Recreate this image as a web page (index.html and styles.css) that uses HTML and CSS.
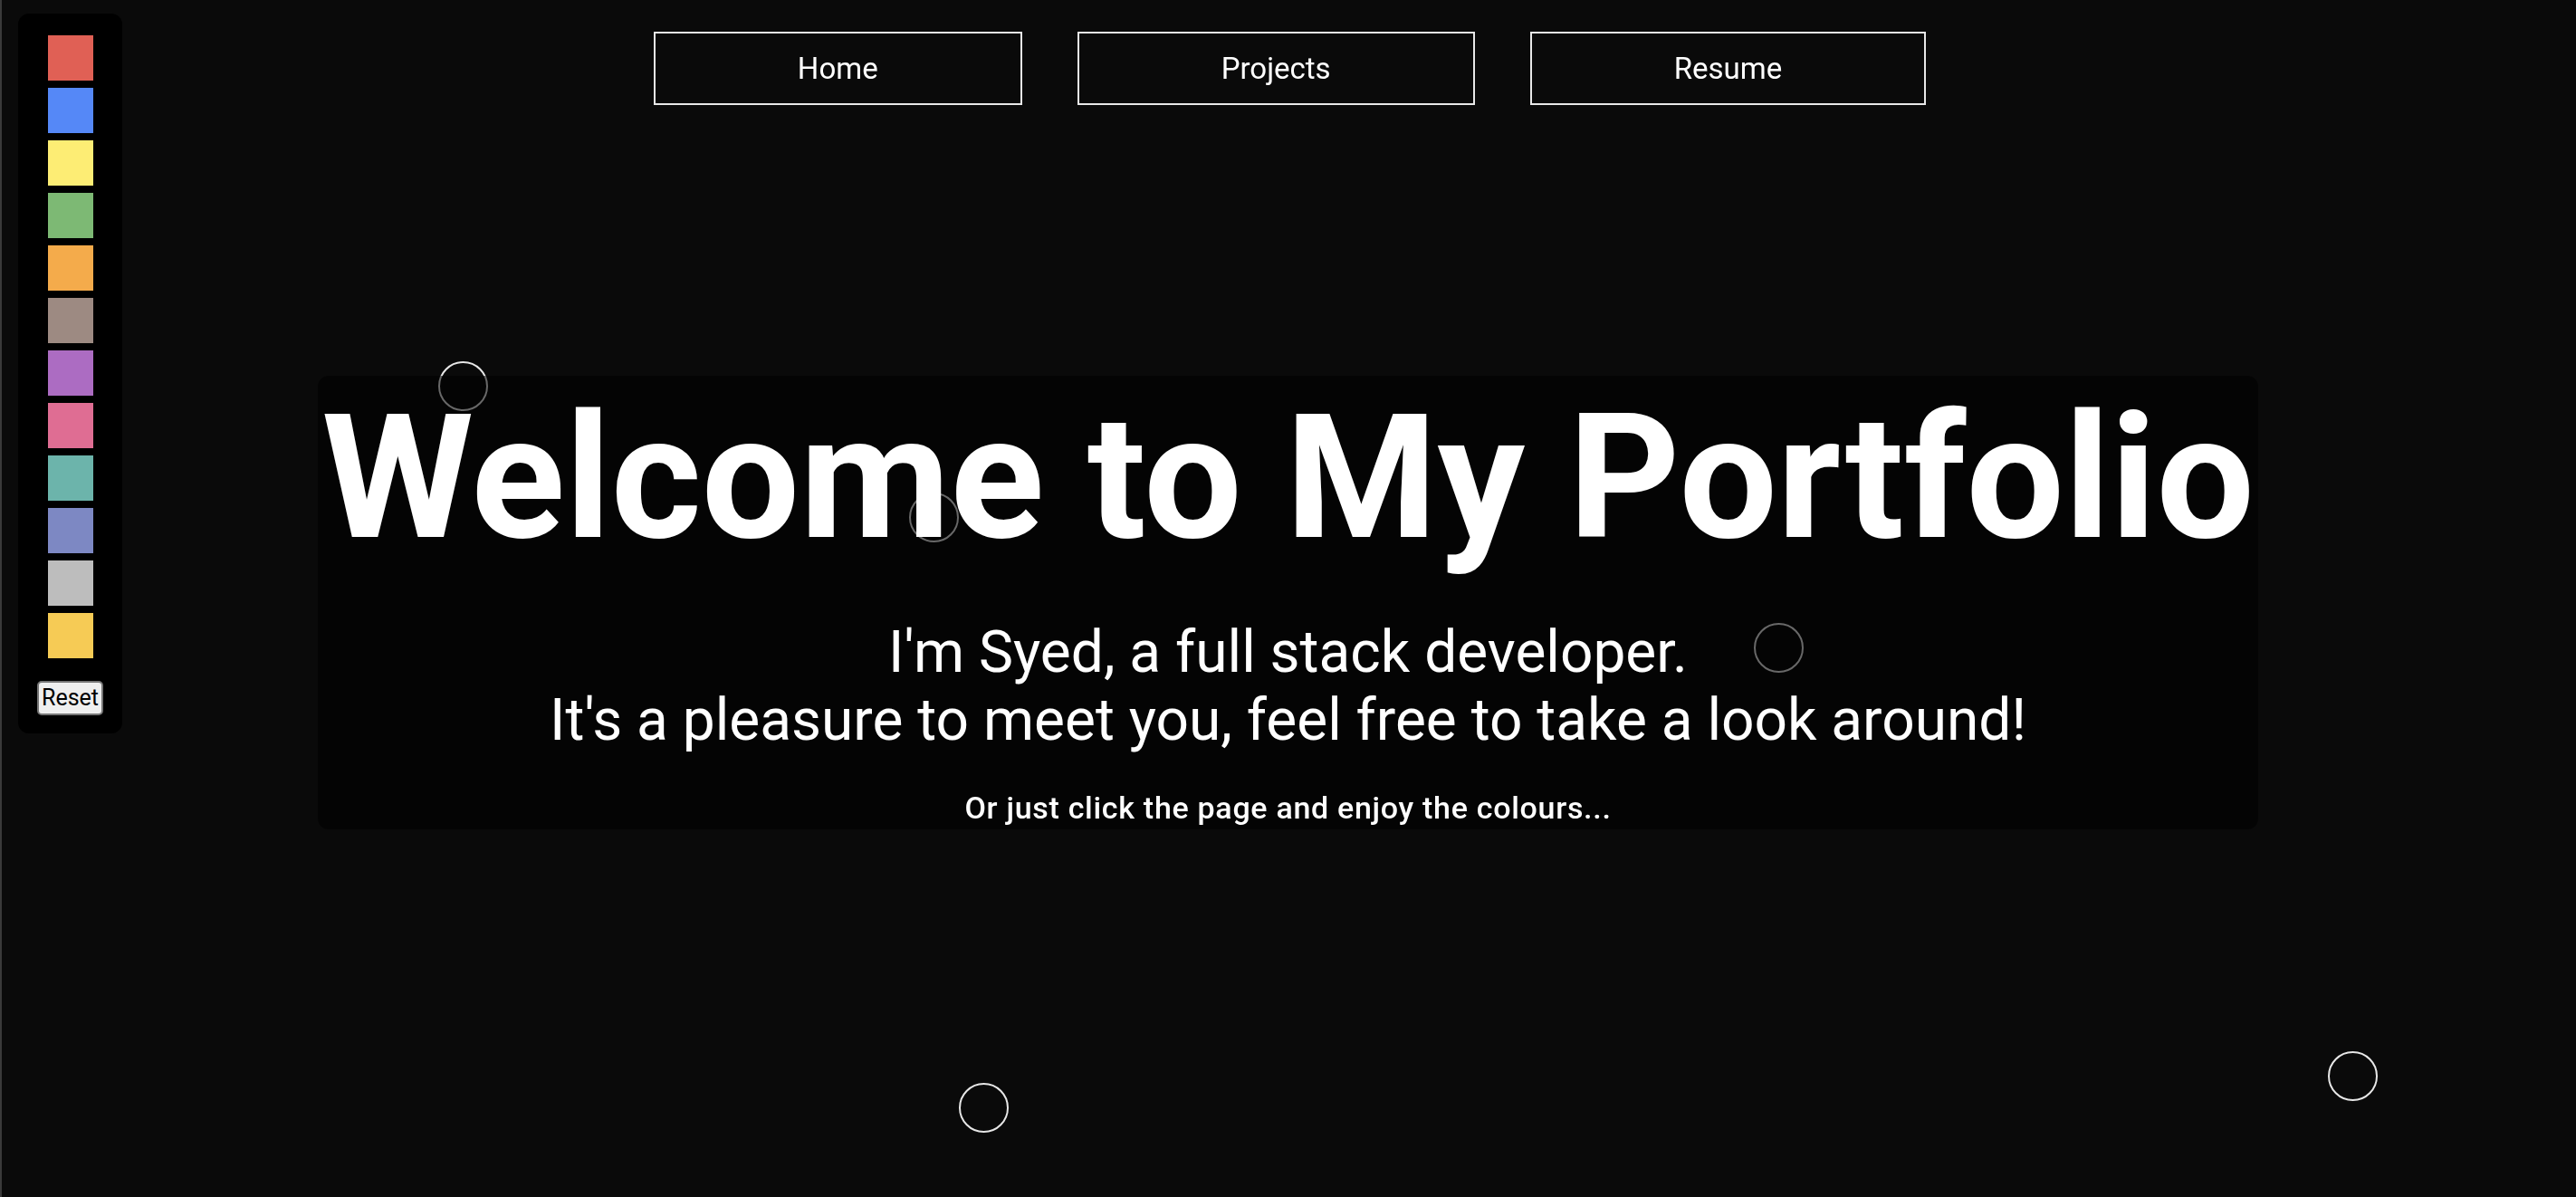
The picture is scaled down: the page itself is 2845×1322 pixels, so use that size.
FILE: index.html
```html
<!DOCTYPE html>
<html lang="en">
<head>
<meta charset="utf-8">
<title>Portfolio</title>
<link rel="stylesheet" href="styles.css">
</head>
<body>
<div class="edge"></div>
<aside class="palette">
  <div class="swatch c1"></div>
  <div class="swatch c2"></div>
  <div class="swatch c3"></div>
  <div class="swatch c4"></div>
  <div class="swatch c5"></div>
  <div class="swatch c6"></div>
  <div class="swatch c7"></div>
  <div class="swatch c8"></div>
  <div class="swatch c9"></div>
  <div class="swatch c10"></div>
  <div class="swatch c11"></div>
  <div class="swatch c12"></div>
  <button class="reset">Reset</button>
</aside>

<div class="bubbles">
  <span class="bubble b1"></span>
  <span class="bubble b2"></span>
  <span class="bubble b3"></span>
  <span class="bubble b4"></span>
  <span class="bubble b5"></span>
</div>

<nav class="nav">
  <a class="nav-btn" href="#">Home</a>
  <a class="nav-btn" href="#">Projects</a>
  <a class="nav-btn" href="#">Resume</a>
</nav>

<main class="hero">
  <h1 class="title">Welcome to My Portfolio</h1>
  <p class="intro">I'm Syed, a full stack developer.<br>It's a pleasure to meet you, feel free to take a look around!</p>
  <p class="hint">Or just click the page and enjoy the colours...</p>
</main>
</body>
</html>
```
FILE: styles.css
```css
html, body {
  margin: 0;
  padding: 0;
}
body {
  background: #0a0a0a;
  color: #fff;
  font-family: Roboto, "Liberation Sans", sans-serif;
  min-height: 1322px;
  overflow: hidden;
}
.edge {
  position: fixed;
  left: 0;
  top: 0;
  bottom: 0;
  width: 2px;
  background: #3a3a3a;
}
.palette {
  position: fixed;
  left: 20px;
  top: 15px;
  width: 115px;
  box-sizing: border-box;
  padding: 24px 0 20px;
  background: #000;
  border-radius: 12px;
  display: flex;
  flex-direction: column;
  align-items: center;
  gap: 8px;
  z-index: 5;
}
.swatch {
  width: 50px;
  height: 50px;
}
.c1 { background: #e06055; }
.c2 { background: #5588f7; }
.c3 { background: #fded74; }
.c4 { background: #7db974; }
.c5 { background: #f4ab4b; }
.c6 { background: #9d8a82; }
.c7 { background: #ac6cc2; }
.c8 { background: #df6d93; }
.c9 { background: #6cb4ab; }
.c10 { background: #7d88c3; }
.c11 { background: #bdbdbd; }
.c12 { background: #f6cb55; }
.reset {
  margin-top: 17px;
  font-family: Roboto, "Liberation Sans", sans-serif;
  font-size: 25px;
  line-height: 30px;
  padding: 2px 3px;
  color: #000;
  background: #efefef;
  border: 2px solid #767676;
  border-radius: 5px;
}
.bubbles {
  position: absolute;
  inset: 0;
  pointer-events: none;
}
.bubble {
  position: absolute;
  width: 55px;
  height: 55px;
  box-sizing: border-box;
  border: 2px solid rgba(255, 255, 255, 0.9);
  border-radius: 50%;
}
.b1 { left: 484px; top: 399px; }
.b2 { left: 1004px; top: 544px; }
.b3 { left: 1937px; top: 688px; }
.b4 { left: 1059px; top: 1196px; }
.b5 { left: 2571px; top: 1161px; }

.nav {
  display: flex;
  justify-content: center;
  gap: 61px;
  padding-top: 35px;
  padding-left: 4px;
}
.nav-btn {
  display: flex;
  align-items: center;
  justify-content: center;
  height: 81px;
  box-sizing: border-box;
  padding: 0 157px;
  border: 2px solid #e8e8e8;
  color: #fff;
  text-decoration: none;
  font-size: 33px;
  position: relative;
  z-index: 2;
}
.hero {
  position: relative;
  z-index: 2;
  width: fit-content;
  margin: 299px auto 0;
  background: rgba(0, 0, 0, 0.55);
  border-radius: 12px;
  text-align: center;
  padding-bottom: 5px;
}
.title {
  margin: 0;
  font-size: 192px;
  font-weight: 700;
  line-height: 226px;
  padding: 0 4px;
}
.intro {
  margin: 42px 0 0;
  font-size: 64px;
  line-height: 75px;
}
.hint {
  margin: 41px 0 0;
  font-size: 34px;
  font-weight: 500;
  letter-spacing: 0.7px;
  line-height: 37px;
}
```
